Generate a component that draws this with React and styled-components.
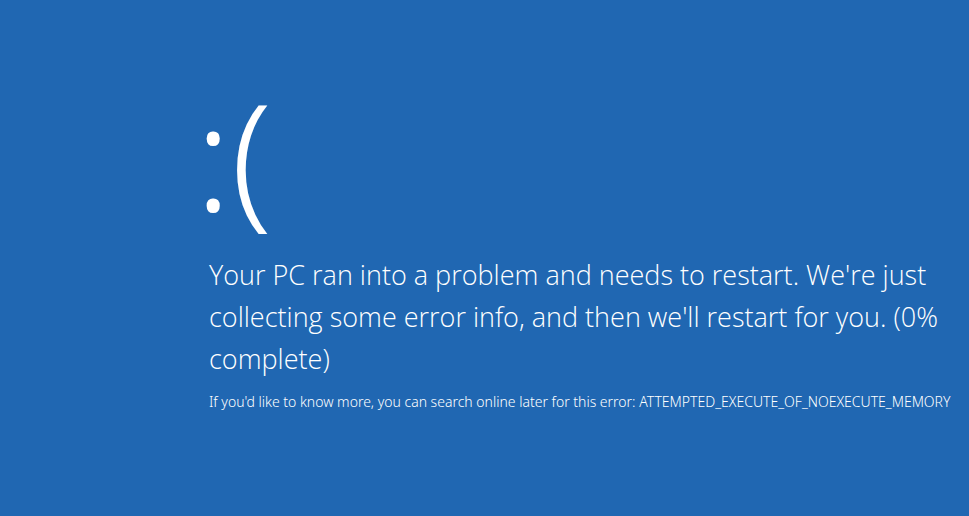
import React from "react";
import styled, { createGlobalStyle } from "styled-components";

const GlobalStyle = createGlobalStyle`
  * { box-sizing: border-box; }
  body { margin: 0; background: #2067b2; }
`;

const Screen = styled.main`
  min-height: 100vh;
  padding: 74px 16px 74px 209px;
  background: #2067b2;
  color: #fff;
  font-family: "Noto Sans", "Open Sans", sans-serif;
  font-weight: 300;
`;

const Face = styled.h1`
  margin: 0 0 20px -14px;
  font-size: 148px;
  line-height: 160px;
  font-weight: 300;
`;

const Message = styled.p`
  margin: 0;
  font-family: "Open Sans", sans-serif;
  font-size: 27px;
  line-height: 42px;
`;

const Detail = styled.p`
  margin: 12px 0 0;
  font-size: 14px;
  line-height: 20px;
  white-space: nowrap;
`;

export default function App() {
  return (
    <>
      <GlobalStyle />
      <Screen>
        <Face>:(</Face>
        <Message>
          Your PC ran into a problem and needs to restart. We're just
          collecting some error info, and then we'll restart for you. (0%
          complete)
        </Message>
        <Detail>
          If you'd like to know more, you can search online later for this
          error: ATTEMPTED_EXECUTE_OF_NOEXECUTE_MEMORY
        </Detail>
      </Screen>
    </>
  );
}
